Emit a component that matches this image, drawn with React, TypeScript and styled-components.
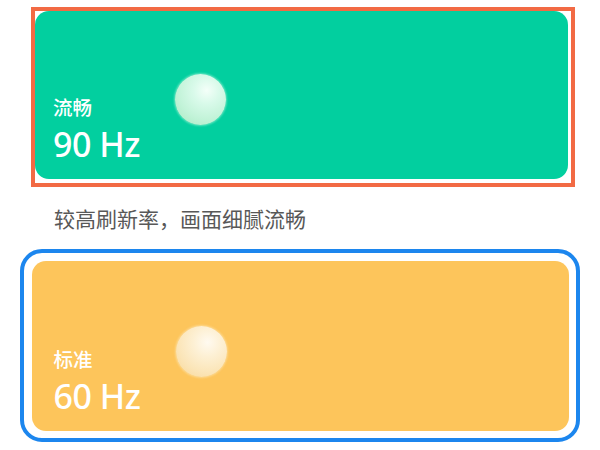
import React from "react";
import styled, { createGlobalStyle } from "styled-components";

const GlobalStyle = createGlobalStyle`
  html, body {
    margin: 0;
    padding: 0;
    background: #ffffff;
  }
  body {
    font-family: "Noto Sans", "Noto Sans CJK SC", sans-serif;
  }
  * { box-sizing: border-box; }
`;

const Page = styled.div`
  width: 600px;
  height: 450px;
  padding-top: 7px;
  display: flex;
  flex-direction: column;
  overflow: hidden;
`;

const Highlight = styled.div`
  margin-left: 31px;
  width: 544px;
  height: 180px;
  border: 4.5px solid #f26a44;
  padding: 0 3.5px 4.5px 0;
  display: flex;
`;

const Selected = styled.div`
  margin-left: 20px;
  width: 560px;
  border: 4.5px solid #1c86ee;
  border-radius: 22px;
  padding: 7.5px;
  display: flex;
`;

type Tone = "green" | "yellow";

const tones = {
  green: {
    bg: "#02cf9f",
    ball: "radial-gradient(circle at 62% 32%, #f4fff9 0%, #d9faea 28%, #c2f3d8 62%, #a6e9c0 100%)",
    glow: "rgba(210, 255, 230, 0.45)",
  },
  yellow: {
    bg: "#fdc55b",
    ball: "radial-gradient(circle at 62% 32%, #fffaf0 0%, #fdf0d4 30%, #fbe5b8 64%, #f8d693 100%)",
    glow: "rgba(255, 240, 205, 0.45)",
  },
};

const Card = styled.div<{ $tone: Tone; $inset: number }>`
  position: relative;
  flex: 1;
  height: ${(p) => (p.$tone === "green" ? "auto" : "170px")};
  border-radius: 14px;
  background: ${(p) => tones[p.$tone].bg};
  padding: 0 0 18px ${(p) => p.$inset}px;
  display: flex;
  flex-direction: column;
  justify-content: flex-end;
  color: #ffffff;
`;

const Label = styled.div`
  font-family: "Noto Sans CJK SC", "Noto Sans", sans-serif;
  font-size: 19.5px;
  font-weight: 500;
  line-height: 20px;
  margin-bottom: 10px;
`;

const Rate = styled.div`
  font-family: "Noto Sans", "Noto Sans CJK SC", sans-serif;
  font-size: 34px;
  font-weight: 500;
  line-height: 34px;
  letter-spacing: -0.5px;
`;

const Ball = styled.div<{ $tone: Tone; $left: number }>`
  position: absolute;
  left: ${(p) => p.$left}px;
  bottom: 54px;
  width: 51px;
  height: 51px;
  border-radius: 50%;
  background: ${(p) => tones[p.$tone].ball};
  box-shadow: 0 0 2px 1px ${(p) => tones[p.$tone].glow};
`;

const Description = styled.div`
  margin: 19px 0 19px 54px;
  font-family: "Noto Sans CJK SC", sans-serif;
  font-size: 21px;
  line-height: 24px;
  color: #585858;
`;

export default function App() {
  return (
    <>
      <GlobalStyle />
      <Page>
        <Highlight>
          <Card $tone="green" $inset={18}>
            <Ball $tone="green" $left={140} />
            <Label>流畅</Label>
            <Rate>90 Hz</Rate>
          </Card>
        </Highlight>
        <Description>较高刷新率，画面细腻流畅</Description>
        <Selected>
          <Card $tone="yellow" $inset={22}>
            <Ball $tone="yellow" $left={144} />
            <Label>标准</Label>
            <Rate>60 Hz</Rate>
          </Card>
        </Selected>
      </Page>
    </>
  );
}
